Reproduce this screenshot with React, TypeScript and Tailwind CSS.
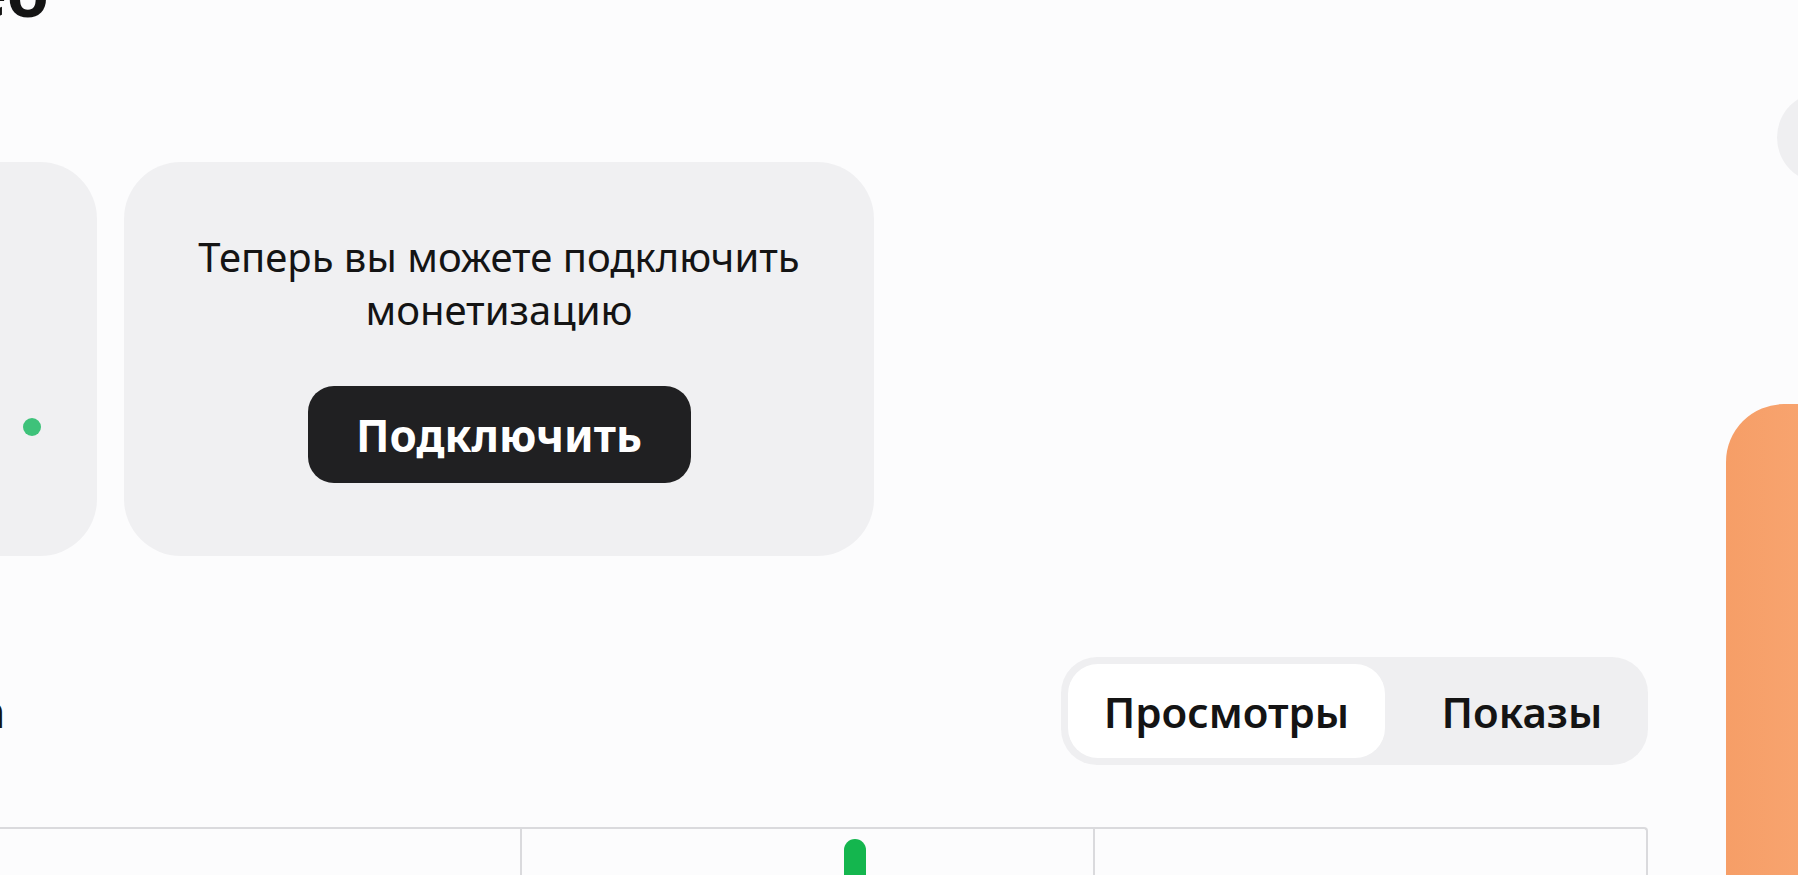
export default function App() {
  return (
    <div className="flex h-[875px] w-[1798px] overflow-hidden bg-[#fcfcfd] font-['Noto_Sans',sans-serif] text-[#141414]">
      {/* main column starts offscreen on the left */}
      <main className="ml-[-200px] flex w-[1848px] shrink-0 flex-col">
        <div className="mt-[-43px] flex h-[68px] w-[249px] shrink-0 justify-end">
          <h1 className="whitespace-nowrap text-[68px] font-bold leading-none">Видео</h1>
        </div>

        <section className="mt-[137px] flex h-[394px] shrink-0 gap-[27px]">
          <div className="flex w-[297px] justify-end rounded-[57px] bg-[#f0f0f2] pr-[56px] pt-[256px]">
            <span className="size-[18px] rounded-full bg-[#3ec27a]" />
          </div>

          <div className="flex w-[750px] flex-col items-center rounded-[57px] bg-[#f0f0f2] pt-[68px]">
            <p className="text-center text-[40px] leading-[53px]">
              Теперь вы можете подключить
              <br />
              монетизацию
            </p>
            <button
              type="button"
              className="mt-[50px] flex h-[97px] w-[383px] items-center justify-center rounded-[26px] bg-[#202022] text-[44px] font-bold text-white"
            >
              Подключить
            </button>
          </div>
        </section>

        <div className="mt-[101px] flex h-[108px] shrink-0 items-center">
          <div className="flex w-[205px] justify-end">
            <h2 className="whitespace-nowrap text-[44px] font-bold leading-none">Аналитика</h2>
          </div>
          <div className="ml-auto flex h-[108px] w-[587px] rounded-[36px] bg-[#efeff1] p-[7px]">
            <button
              type="button"
              className="flex w-[317px] items-center justify-center rounded-[30px] bg-white text-[42px] font-semibold"
            >
              Просмотры
            </button>
            <button
              type="button"
              className="flex flex-1 items-center justify-center pl-[18px] text-[42px] font-semibold"
            >
              Показы
            </button>
          </div>
        </div>

        <div className="mt-[62px] grid h-[100px] shrink-0 grid-cols-[722px_573px_1fr] rounded-tr-[4px] border-t-2 border-r-2 border-[#dadadd]">
          <div className="border-r-2 border-[#dadadd]" />
          <div className="border-r-2 border-[#dadadd] pl-[322px] pt-[10px]">
            <div className="h-[80px] w-[22px] rounded-t-full bg-[#14b64e]" />
          </div>
          <div />
        </div>
      </main>

      <aside className="ml-[78px] flex w-[300px] shrink-0 flex-col">
        <div className="ml-[51px] mt-[92px] size-[91px] shrink-0 rounded-full bg-[#efeff1]" />
        <div className="mt-[221px] h-[600px] shrink-0 rounded-[58px] bg-gradient-to-r from-[#f69e67] to-[#fcb485]" />
      </aside>
    </div>
  )
}
